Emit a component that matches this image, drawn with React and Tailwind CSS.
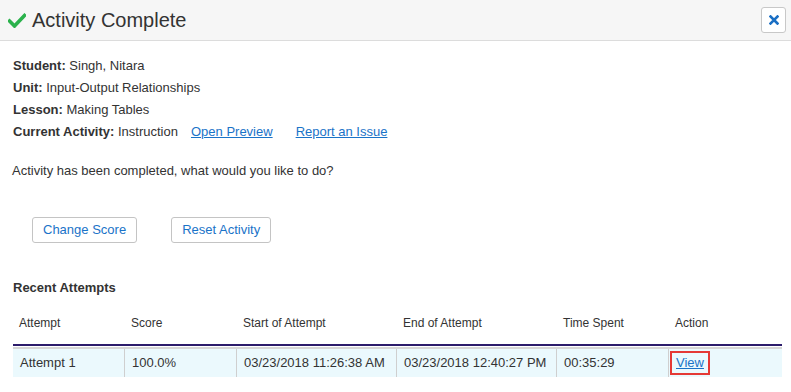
import { useState } from "react";

const attempts = [
  {
    attempt: "Attempt 1",
    score: "100.0%",
    start: "03/23/2018 11:26:38 AM",
    end: "03/23/2018 12:40:27 PM",
    spent: "00:35:29",
  },
];

const cols = [
  { label: "Attempt", w: "w-[112px]" },
  { label: "Score", w: "w-[112px]" },
  { label: "Start of Attempt", w: "w-[160px]" },
  { label: "End of Attempt", w: "w-[160px]" },
  { label: "Time Spent", w: "w-[112px]" },
  { label: "Action", w: "flex-1" },
];

const App = () => {
  const [rows] = useState(attempts);

  return (
    <div className="w-[791px] h-[392px] bg-white text-[13px] text-[#333] font-['Liberation_Sans',Arial,sans-serif] overflow-hidden">
      <div className="h-[41px] bg-[#f6f6f6] border-b border-[#dcdcdc] flex items-center pl-[8px] pr-[5px]">
        <svg width="18" height="15" viewBox="0 0 18 15" className="mr-[6px] mt-[1px]">
          <path d="M1.5 8 L6.5 13 L16.5 2.5" fill="none" stroke="#2bb24c" strokeWidth="3.6" strokeLinecap="square" />
        </svg>
        <h1 className="text-[20px] leading-none text-[#333]">Activity Complete</h1>
        <button className="ml-auto w-[25px] h-[26px] bg-white border border-[#c8c8c8] rounded-[3px] flex items-center justify-center">
          <svg width="10" height="10" viewBox="0 0 10 10">
            <path d="M1.5 1.5 L8.5 8.5 M8.5 1.5 L1.5 8.5" stroke="#1a6fc4" strokeWidth="2.6" strokeLinecap="square" />
          </svg>
        </button>
      </div>

      <div className="px-[13px] pt-[14px]">
        <div className="leading-[22px]">
          <div><b>Student:</b> Singh, Nitara</div>
          <div><b>Unit:</b> Input-Output Relationships</div>
          <div><b>Lesson:</b> Making Tables</div>
          <div className="flex">
            <span><b>Current Activity:</b> Instruction</span>
            <a href="#" className="ml-[13px] text-[#1a73c8] underline">Open Preview</a>
            <a href="#" className="ml-[23px] text-[#1a73c8] underline">Report an Issue</a>
          </div>
        </div>

        <p className="mt-[17px] leading-[22px] -ml-[1px]">Activity has been completed, what would you like to do?</p>

        <div className="flex gap-[34px] mt-[35px] ml-[19px]">
          <button className="h-[26px] px-[10px] bg-white border border-[#c4c4c4] rounded-[3px] text-[#1a73c8]">Change Score</button>
          <button className="h-[26px] px-[10px] bg-white border border-[#c4c4c4] rounded-[3px] text-[#1a73c8]">Reset Activity</button>
        </div>

        <h2 className="mt-[34px] font-bold leading-[22px]">Recent Attempts</h2>

        <div className="mt-[15px] w-[769px] text-[12px]">
          <div className="flex h-[32px] items-start border-b-[2px] border-[#2c1c6b]">
            {cols.map((c) => (
              <div key={c.label} className={`${c.w} pl-[6px]`}>{c.label}</div>
            ))}
          </div>
          <div className="h-[1px] bg-white" />
          {rows.map((r) => (
            <div key={r.attempt} className="flex h-[30px] items-stretch bg-[#ebf9fd] border-t-[2px] border-[#d6d6d6] text-[13px]">
              <div className="w-[112px] pl-[7px] flex items-center border-r border-[#cfcfcf]">{r.attempt}</div>
              <div className="w-[112px] pl-[7px] flex items-center border-r border-[#cfcfcf]">{r.score}</div>
              <div className="w-[160px] pl-[7px] flex items-center border-r border-[#cfcfcf]">{r.start}</div>
              <div className="w-[160px] pl-[7px] flex items-center border-r border-[#cfcfcf]">{r.end}</div>
              <div className="w-[112px] pl-[7px] flex items-center border-r border-[#cfcfcf]">{r.spent}</div>
              <div className="flex-1 pl-[1px] flex items-center">
                <a href="#" className="border-[2px] border-[#e53935] px-[4px] h-[24px] flex items-center text-[#1a73c8] underline">View</a>
              </div>
            </div>
          ))}
        </div>
      </div>
    </div>
  );
};

export default App;
